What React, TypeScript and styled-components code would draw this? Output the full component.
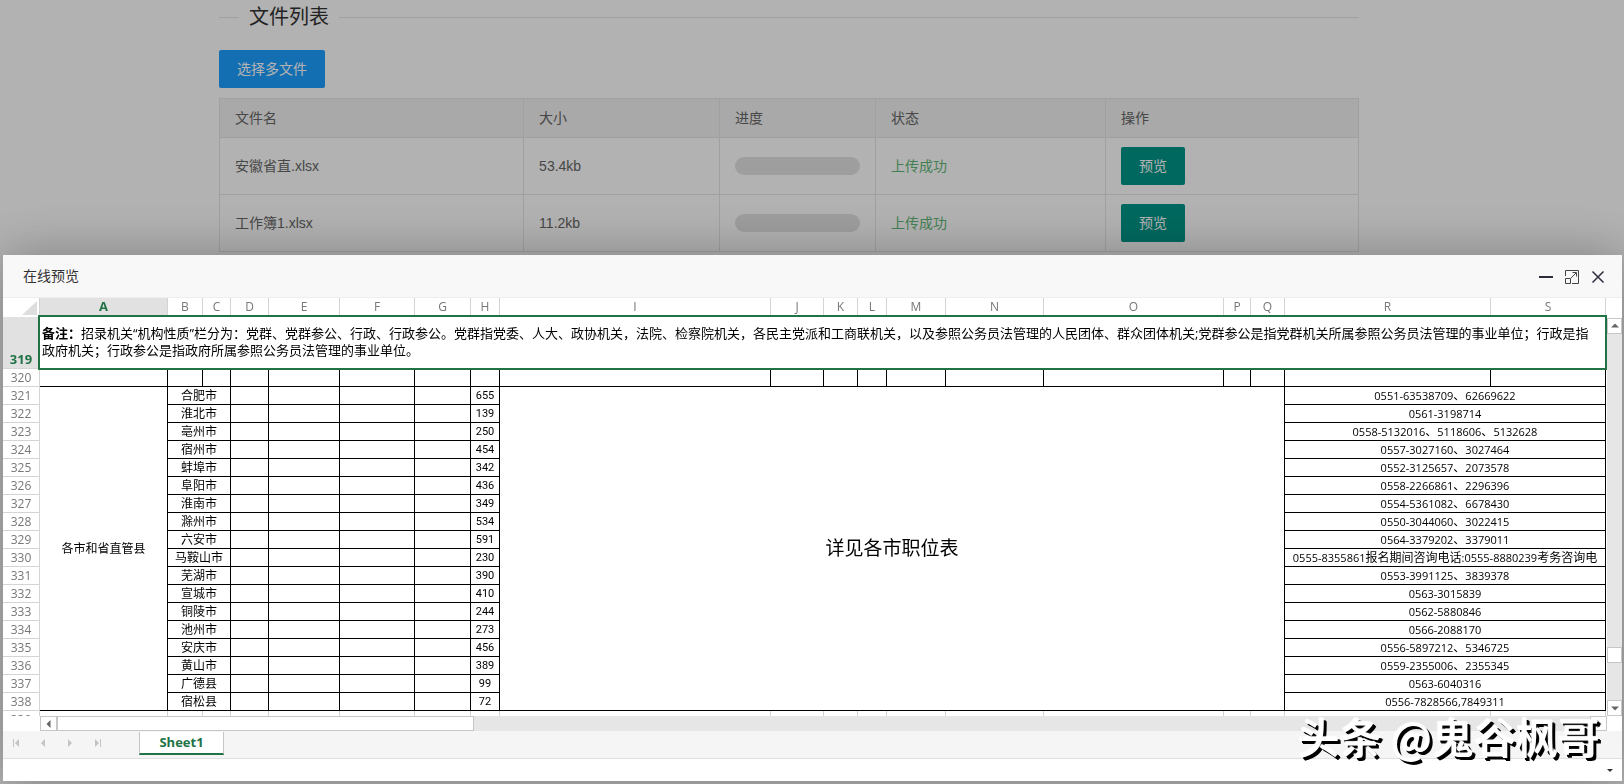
import React from "react";
import styled, { createGlobalStyle, css } from "styled-components";

const GlobalStyle = createGlobalStyle`
  *, *::before, *::after { box-sizing: border-box; }
  body {
    margin: 0;
    overflow: hidden;
    background: #fff;
    font: 14px/24px "Liberation Sans", "Noto Sans CJK SC", sans-serif;
    color: #333;
  }
  button { font: inherit; margin: 0; border: 0; padding: 0; cursor: pointer; }
`;

const SHEET_FONT = `"Open Sans", "Noto Sans CJK SC", sans-serif`;
const GREEN = "#217346";

/* ---------- upload page ---------- */

const Page = styled.main`
  min-height: 100vh;
  padding: 2px 46px 0 0;
`;

const Container = styled.div`
  max-width: 1140px;
  margin: 0 auto;
`;

const Section = styled.fieldset`
  margin: 0 0 18px;
  padding: 0;
  border: 0 solid #e6e6e6;
  border-top-width: 1px;
`;

const SectionTitle = styled.legend`
  margin-left: 20px;
  padding: 0 10px;
  font-size: 20px;
  line-height: 30px;
`;

const Btn = styled.button<{ $tone: "blue" | "teal" }>`
  display: block;
  height: 38px;
  padding: 0 18px;
  border-radius: 2px;
  line-height: 38px;
  color: #fff;
  background: ${(p) => (p.$tone === "blue" ? "#1e9fff" : "#009688")};
`;

const FileTable = styled.table`
  width: 100%;
  margin-top: 10px;
  table-layout: fixed;
  border-collapse: collapse;
  color: #666;
  th, td {
    padding: 0 15px;
    border: 1px solid #e6e6e6;
    text-align: left;
    font-weight: 400;
  }
  thead tr { height: 39px; background: #f2f2f2; }
  tbody tr { height: 57px; }
`;

const Progress = styled.div`
  height: 18px;
  border-radius: 20px;
  background: #e2e2e2;
`;

const Success = styled.span`
  color: #5fb878;
`;

const Shade = styled.div`
  position: fixed;
  inset: 0;
  background: rgba(0, 0, 0, 0.3);
`;

/* ---------- preview dialog ---------- */

const Dialog = styled.section`
  position: fixed;
  inset: 255px 2px 3px 3px;
  display: flex;
  flex-direction: column;
  background: #fff;
  box-shadow: 1px 1px 50px rgba(0, 0, 0, 0.3);
`;

const TitleBar = styled.header`
  display: flex;
  align-items: center;
  flex: none;
  height: 43px;
  padding: 0 16px 0 20px;
  border-bottom: 1px solid #eee;
  background: #f8f8f8;
`;

const DialogTitle = styled.h2`
  flex: 1;
  margin: 0;
  font-size: 14px;
  font-weight: 400;
`;

const TitleActions = styled.div`
  display: flex;
  gap: 10px;
  padding-top: 2px;
`;

const IconButton = styled.button`
  display: flex;
  width: 16px;
  height: 16px;
  background: none;
`;

const Workspace = styled.div`
  display: flex;
  flex: 1;
  min-height: 0;
`;

const SheetView = styled.div`
  flex: 1;
  min-width: 0;
  overflow: hidden;
`;

const Grid = styled.table`
  table-layout: fixed;
  width: 1603px;
  border-collapse: separate;
  border-spacing: 0;
  font: 12px/17px ${SHEET_FONT};
  color: #000;
  th, td { padding: 0; overflow: hidden; white-space: nowrap; }
`;

const active = css`
  background: #e1e1e1;
  color: ${GREEN};
  font-size: 13px;
  font-weight: 700;
`;

const ColHead = styled.th<{ $active?: boolean }>`
  height: 19px;
  border-right: 1px solid #d4d4d4;
  font-weight: 400;
  vertical-align: top;
  color: #777;
  ${(p) => p.$active && active}
`;

const Corner = styled.td`
  border-right: 1px solid #d4d4d4;
  svg { display: block; margin-left: auto; }
`;

const RowHead = styled.th<{ $active?: boolean }>`
  height: 18px;
  border-right: 1px solid #d4d4d4;
  border-bottom: 1px solid #d4d4d4;
  font-weight: 400;
  vertical-align: bottom;
  color: #777;
  ${(p) => p.$active && active}
`;

const Cell = styled.td<{ $light?: boolean; $size?: number }>`
  border: 0 solid ${(p) => (p.$light ? "#d4d4d4" : "#000")};
  border-right-width: 1px;
  border-bottom-width: ${(p) => (p.$light ? 0 : 1)}px;
  text-align: center;
  font-size: ${(p) => p.$size ?? 12}px;
`;

const CountCell = styled(Cell)`
  font-family: Roboto, sans-serif;
  font-size: 11px;
`;

const Han = styled.span`
  font-size: 12px;
`;

const NoteCell = styled.td`
  && {
    position: relative;
    overflow: visible;
    height: 52px;
    padding: 0 0 2px 2px;
    font-size: 13px;
    text-align: left;
  }
  &::after {
    content: "";
    position: absolute;
    inset: -2px -1px -1px -2px;
    border: 2px solid ${GREEN};
  }
`;

const VTrack = styled.div`
  display: flex;
  flex-direction: column;
  width: 15px;
  margin-top: 20px;
  background: #e6e6e6;
`;

const HTrack = styled.div`
  display: flex;
  flex: none;
  height: 15px;
  margin: 0 15px 0 37px;
  background: #e6e6e6;
`;

const ArrowButton = styled.button`
  display: flex;
  align-items: center;
  justify-content: center;
  flex: none;
  width: 17px;
  height: 16px;
  border: 1px solid #c6c6c6;
  background: #fff;
  ${VTrack} & { width: 15px; }
  ${HTrack} & { height: 15px; }
`;

const Thumb = styled.div`
  border: 1px solid #c6c6c6;
  background: #fff;
  ${VTrack} & { height: 16px; }
  ${HTrack} & { width: 417px; }
`;

const Spring = styled.div<{ $grow: number }>`
  flex: ${(p) => p.$grow} 1 0;
`;

const TabBar = styled.nav`
  display: flex;
  align-items: center;
  flex: none;
  height: 28px;
  padding: 0 0 3px 8px;
  border-bottom: 1px solid #e0e0e0;
  background: #f5f5f5;
`;

const SheetNav = styled.div`
  display: flex;
  gap: 11px;
  width: 128px;
`;

const SheetTab = styled.button`
  width: 85px;
  height: 23px;
  border: 1px solid #c6c6c6;
  border-top: 0;
  border-bottom: 2px solid ${GREEN};
  background: #fff;
  color: ${GREEN};
  font: 700 13px/19px ${SHEET_FONT};
`;

const StatusBar = styled.footer`
  display: flex;
  align-items: center;
  justify-content: flex-end;
  flex: none;
  height: 22px;
  padding-right: 4px;
`;

const Watermark = styled.div`
  position: fixed;
  right: 24px;
  bottom: 24px;
  font: 500 42px/48px "Noto Sans CJK SC", sans-serif;
  color: #fff;
  text-shadow: -1px -1px 1px #fff, 2px 2px 0 #000, 3px 3px 0 #000;
  white-space: nowrap;
`;

const Triangle = ({ dir, color = "#666" }: { dir: "up" | "down" | "left" | "right"; color?: string }) => {
  const d = {
    up: "M1 6.5 5 2.5l4 4z",
    down: "M1 3.5 5 7.500l4-4z",
    left: "M6.500 1 2.500 5l4 4z",
    right: "M3.500 1l4 4-4 4z",
  }[dir];
  return (
    <svg width="10" height="10" viewBox="0 0 10 10" fill={color} aria-hidden="true">
      <path d={d} />
    </svg>
  );
};

const NavIcon = ({ d }: { d: string }) => (
  <svg width="16" height="16" viewBox="0 0 16 16" fill="#c4c4c4" aria-hidden="true">
    <path d={d} />
  </svg>
);

const files = [
  { name: "安徽省直.xlsx", size: "53.4kb" },
  { name: "工作簿1.xlsx", size: "11.2kb" },
];

const columns: [string, number][] = [
  ["A", 128], ["B", 35], ["C", 28], ["D", 38], ["E", 71], ["F", 75], ["G", 56], ["H", 29],
  ["I", 271], ["J", 53], ["K", 34], ["L", 29], ["M", 59], ["N", 98], ["O", 180], ["P", 27],
  ["Q", 34], ["R", 206], ["S", 115],
];

const cities: [string, number, string][] = [
  ["合肥市", 655, "0551-63538709、62669622"],
  ["淮北市", 139, "0561-3198714"],
  ["亳州市", 250, "0558-5132016、5118606、5132628"],
  ["宿州市", 454, "0557-3027160、3027464"],
  ["蚌埠市", 342, "0552-3125657、2073578"],
  ["阜阳市", 436, "0558-2266861、2296396"],
  ["淮南市", 349, "0554-5361082、6678430"],
  ["滁州市", 534, "0550-3044060、3022415"],
  ["六安市", 591, "0564-3379202、3379011"],
  ["马鞍山市", 230, "0555-8355861报名期间咨询电话:0555-8880239考务咨询电"],
  ["芜湖市", 390, "0553-3991125、3839378"],
  ["宣城市", 410, "0563-3015839"],
  ["铜陵市", 244, "0562-5880846"],
  ["池州市", 273, "0566-2088170"],
  ["安庆市", 456, "0556-5897212、5346725"],
  ["黄山市", 389, "0559-2355006、2355345"],
  ["广德县", 99, "0563-6040316"],
  ["宿松县", 72, "0556-7828566,7849311"],
];

/* Phone numbers are set a size smaller than the Chinese text between them. */
const Phone = ({ text }: { text: string }) => (
  <>
    {text.split(/([、\u4e00-\u9fff]+)/).map((part, i) => (i % 2 ? <Han key={i}>{part}</Han> : part))}
  </>
);

function FileList() {
  return (
    <Page>
      <Container>
        <Section>
          <SectionTitle>文件列表</SectionTitle>
        </Section>
        <Btn $tone="blue" type="button">选择多文件</Btn>
        <FileTable>
          <colgroup>
            <col style={{ width: "26.7%" }} />
            <col style={{ width: "17.2%" }} />
            <col style={{ width: "13.7%" }} />
            <col style={{ width: "20.2%" }} />
            <col />
          </colgroup>
          <thead>
            <tr>
              <th>文件名</th>
              <th>大小</th>
              <th>进度</th>
              <th>状态</th>
              <th>操作</th>
            </tr>
          </thead>
          <tbody>
            {files.map((f) => (
              <tr key={f.name}>
                <td>{f.name}</td>
                <td>{f.size}</td>
                <td><Progress /></td>
                <td><Success>上传成功</Success></td>
                <td><Btn $tone="teal" type="button">预览</Btn></td>
              </tr>
            ))}
          </tbody>
        </FileTable>
      </Container>
    </Page>
  );
}

function Sheet() {
  return (
    <Grid>
      <colgroup>
        <col style={{ width: 37 }} />
        {columns.map(([name, width]) => <col key={name} style={{ width }} />)}
      </colgroup>
      <thead>
        <tr>
          <Corner>
            <svg width="18" height="16" viewBox="0 0 18 16" aria-hidden="true">
              <path d="M16 1v14H1z" fill="#dedede" />
            </svg>
          </Corner>
          {columns.map(([name]) => <ColHead key={name} $active={name === "A"}>{name}</ColHead>)}
        </tr>
      </thead>
      <tbody>
        <tr>
          <RowHead $active>319</RowHead>
          <NoteCell colSpan={19}>
            <b>备注：</b>招录机关“机构性质”栏分为：党群、党群参公、行政、行政参公。党群指党委、人大、政协机关，法院、检察院机关，各民主党派和工商联机关，以及参照公务员法管理的人民团体、群众团体机关;党群参公是指党群机关所属参照公务员法管理的事业单位；行政是指
            <br />
            政府机关；行政参公是指政府所属参照公务员法管理的事业单位。
          </NoteCell>
        </tr>
        <tr>
          <RowHead>320</RowHead>
          {columns.map(([name]) => <Cell key={name} />)}
        </tr>
        {cities.map(([city, count, phone], i) => (
          <tr key={city}>
            <RowHead>{321 + i}</RowHead>
            {i === 0 && <Cell rowSpan={18}>各市和省直管县</Cell>}
            <Cell colSpan={2}>{city}</Cell>
            <Cell />
            <Cell />
            <Cell />
            <Cell />
            <CountCell>{count}</CountCell>
            {i === 0 && <Cell rowSpan={18} colSpan={9} $size={19}>详见各市职位表</Cell>}
            <Cell colSpan={2} $size={11}><Phone text={phone} /></Cell>
          </tr>
        ))}
        <tr>
          <RowHead>339</RowHead>
          {columns.map(([name]) => <Cell key={name} $light />)}
        </tr>
      </tbody>
    </Grid>
  );
}

export default function App() {
  return (
    <>
      <GlobalStyle />
      <FileList />
      <Shade />
      <Dialog role="dialog" aria-labelledby="preview-title">
        <TitleBar>
          <DialogTitle id="preview-title">在线预览</DialogTitle>
          <TitleActions>
            <IconButton type="button" aria-label="最小化">
              <svg width="16" height="16" viewBox="0 0 16 16"><path d="M1 8h14" stroke="#2e2d3c" strokeWidth="2" /></svg>
            </IconButton>
            <IconButton type="button" aria-label="最大化">
              <svg width="16" height="16" viewBox="0 0 16 16" fill="none" stroke="#444">
                <path d="M1.500 7V1.500h13v13H8M1.500 9.500h5v5h-5zM7 9l5-5M8.500 3.500h4v4" />
              </svg>
            </IconButton>
            <IconButton type="button" aria-label="关闭">
              <svg width="16" height="16" viewBox="0 0 16 16"><path d="M2.500 2.500l11 11M13.500 2.500l-11 11" stroke="#2e2d3c" strokeWidth="1.500" /></svg>
            </IconButton>
          </TitleActions>
        </TitleBar>
        <Workspace>
          <SheetView><Sheet /></SheetView>
          <VTrack>
            <ArrowButton type="button" aria-label="向上滚动"><Triangle dir="up" /></ArrowButton>
            <Spring $grow={313} />
            <Thumb />
            <Spring $grow={37} />
            <ArrowButton type="button" aria-label="向下滚动"><Triangle dir="down" /></ArrowButton>
          </VTrack>
        </Workspace>
        <HTrack>
          <ArrowButton type="button" aria-label="向左滚动"><Triangle dir="left" /></ArrowButton>
          <Thumb />
          <Spring $grow={1} />
          <ArrowButton type="button" aria-label="向右滚动"><Triangle dir="right" /></ArrowButton>
        </HTrack>
        <TabBar>
          <SheetNav>
            <IconButton type="button" aria-label="第一个工作表"><NavIcon d="M2 4h1v8H2zM8 4v8L4 8z" /></IconButton>
            <IconButton type="button" aria-label="上一个工作表"><NavIcon d="M7 4v8L3 8z" /></IconButton>
            <IconButton type="button" aria-label="下一个工作表"><NavIcon d="M3 4v8l4-4z" /></IconButton>
            <IconButton type="button" aria-label="最后一个工作表"><NavIcon d="M3 4v8l4-4zM8 4h1v8H8z" /></IconButton>
          </SheetNav>
          <SheetTab type="button">Sheet1</SheetTab>
        </TabBar>
        <StatusBar>
          <IconButton type="button" aria-label="更多">
            <svg width="16" height="16" viewBox="0 0 16 16"><path d="M5 7h6L8 10z" fill="#333" /></svg>
          </IconButton>
        </StatusBar>
      </Dialog>
      <Watermark>头条 @鬼谷枫哥</Watermark>
    </>
  );
}
